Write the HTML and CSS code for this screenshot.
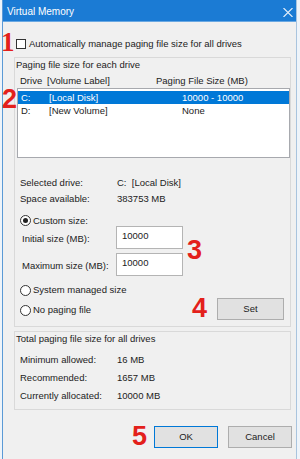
FILE: index.html
```html
<!DOCTYPE html>
<html lang="en">
<head>
  <meta charset="UTF-8" />
  <meta name="viewport" content="width=device-width, initial-scale=1.0"/>
  <title>Virtual Memory</title>
  <link rel="stylesheet" href="styles.css">
</head>
<body>
  <div class="window">
    <div class="titlebar">
      <span>Virtual Memory</span>
      <svg class="close" width="10" height="9" viewBox="0 0 10 9">
        <path d="M0.5 0 L9.5 9 M9.5 0 L0.5 9" stroke="#e6f0fb" stroke-width="1.1" fill="none"/>
      </svg>
    </div>

    <div class="content">
      <div class="check-row"><span class="checkbox"></span>Automatically manage paging file size for all drives</div>

      <div class="group group-drives">
        <div class="group-title">Paging file size for each drive</div>
        <div class="list-head">
          <span class="h-drive">Drive</span>
          <span class="h-label">[Volume Label]</span>
          <span>Paging File Size (MB)</span>
        </div>
        <div class="listbox">
          <div class="row selected"><span class="c-drive">C:</span><span class="c-label">[Local Disk]</span><span>10000 - 10000</span></div>
          <div class="row"><span class="c-drive">D:</span><span class="c-label">[New Volume]</span><span>None</span></div>
        </div>

        <div class="info">
          <span>Selected drive:</span><span>C:&nbsp; [Local Disk]</span>
          <span>Space available:</span><span>383753 MB</span>
        </div>

        <div class="radio-row custom"><span class="radio checked"></span>Custom size:</div>
        <div class="size-row"><span class="size-label">Initial size (MB):</span><div class="input">10000</div></div>
        <div class="size-row second"><span class="size-label">Maximum size (MB):</span><div class="input">10000</div></div>
        <div class="radio-row system"><span class="radio"></span>System managed size</div>
        <div class="last-row">
          <div class="radio-row"><span class="radio"></span>No paging file</div>
          <button class="btn set">Set</button>
        </div>
      </div>

      <div class="group group-total">
        <div class="group-title">Total paging file size for all drives</div>
        <div class="totals">
          <span>Minimum allowed:</span><span>16 MB</span>
          <span>Recommended:</span><span>1657 MB</span>
          <span>Currently allocated:</span><span>10000 MB</span>
        </div>
      </div>

      <div class="actions">
        <button class="btn ok">OK</button>
        <button class="btn">Cancel</button>
      </div>
    </div>
  </div>

  <!-- step markers drawn over the dialog -->
  <span class="step step-1">1</span>
  <span class="step step-2">2</span>
  <span class="step step-3">3</span>
  <span class="step step-4">4</span>
  <span class="step step-5">5</span>
</body>
</html>
```

FILE: styles.css
```css
* { box-sizing: border-box; }
body { margin: 0; background: #eef4fa; font-family: "Liberation Sans", Arial, sans-serif; font-size: 9.5px; line-height: 12px; color: #222; }

.window { margin-left: 2px; width: 295px; height: 459px; border-left: 1px solid #5b9ad6; border-right: 1px solid #a9c4de; background: #f0f0f0; }
.titlebar { height: 22px; padding: 3px 3px 0 4px; background: #1b7bd4; border-bottom: 1px solid #6aa8e2; color: #fff; font-size: 10px; display: flex; align-items: center; justify-content: space-between; }

.content { padding-left: 11px; }
.check-row { display: flex; align-items: center; height: 12px; margin-top: 16px; padding-left: 2px; }
.checkbox { width: 10px; height: 10px; border: 1px solid #333; background: #fff; margin-right: 3px; }

.group { width: 277px; border: 1px solid #d9d9d9; }
.group-title { height: 12px; margin-top: 1px; padding-left: 1px; }
.group-drives { margin-top: 7px; padding-bottom: 6px; }
.group-total { margin-top: 4px; padding-bottom: 7px; }

.list-head { display: flex; height: 12px; margin-top: 4px; padding-left: 5px; }
.h-drive { width: 27px; }
.h-label { width: 109px; }

.listbox { width: 273px; height: 70px; margin: 1px 0 0 2px; padding-top: 2px; background: #fff; border: 1px solid #a7a9ae; }
.row { display: flex; align-items: center; height: 13px; padding-left: 3px; }
.row.selected { background: #0078d7; color: #fff; }
.c-drive { width: 28px; }
.c-label { width: 133px; }

.info, .totals { display: grid; grid-template-columns: 97px auto; padding-left: 5px; }
.info { margin-top: 19px; row-gap: 4px; }
.totals { margin-top: 9px; row-gap: 6px; }

.radio-row { display: flex; align-items: center; height: 12px; padding-left: 5px; }
.radio-row.custom { margin-top: 10px; height: 11px; }
.radio-row.system { margin-top: 8px; }
.radio { width: 11px; height: 11px; border: 1px solid #333; border-radius: 50%; background: #fff; margin-right: 2px; display: flex; align-items: center; justify-content: center; }
.radio.checked::after { content: ""; width: 5px; height: 5px; border-radius: 50%; background: #222; }

.size-row { display: flex; align-items: center; height: 23px; padding-left: 7px; }
.size-row.second { margin-top: 4px; }
.size-label { width: 94px; padding-top: 2px; }
.input { width: 67px; height: 23px; padding: 3px 0 0 5px; background: #fff; border: 1px solid #b4b4b4; align-self: flex-start; }

.last-row { display: flex; align-items: center; justify-content: space-between; height: 22px; margin-top: 2px; padding-right: 6px; }
.last-row .radio-row { padding-top: 2px; }

.btn { font: inherit; color: #222; background: #e1e1e1; border: 1px solid #adadad; height: 22px; padding: 0; }
.set { width: 67px; }
.actions { width: 278px; margin-top: 16px; display: flex; justify-content: flex-end; gap: 10px; }
.actions .btn { width: 64px; }
.btn.ok { border-color: #0078d7; }

.step { position: absolute; font-family: "Liberation Sans", Arial, sans-serif; font-weight: bold; font-size: 27px; line-height: 27px; color: #e3201b; }
.step-1 { left: 1px; top: 29px; font-family: "Liberation Serif", serif; }
.step-2 { left: 2px; top: 86px; }
.step-3 { left: 187px; top: 237px; }
.step-4 { left: 192px; top: 295px; }
.step-5 { left: 132px; top: 423px; }
```
